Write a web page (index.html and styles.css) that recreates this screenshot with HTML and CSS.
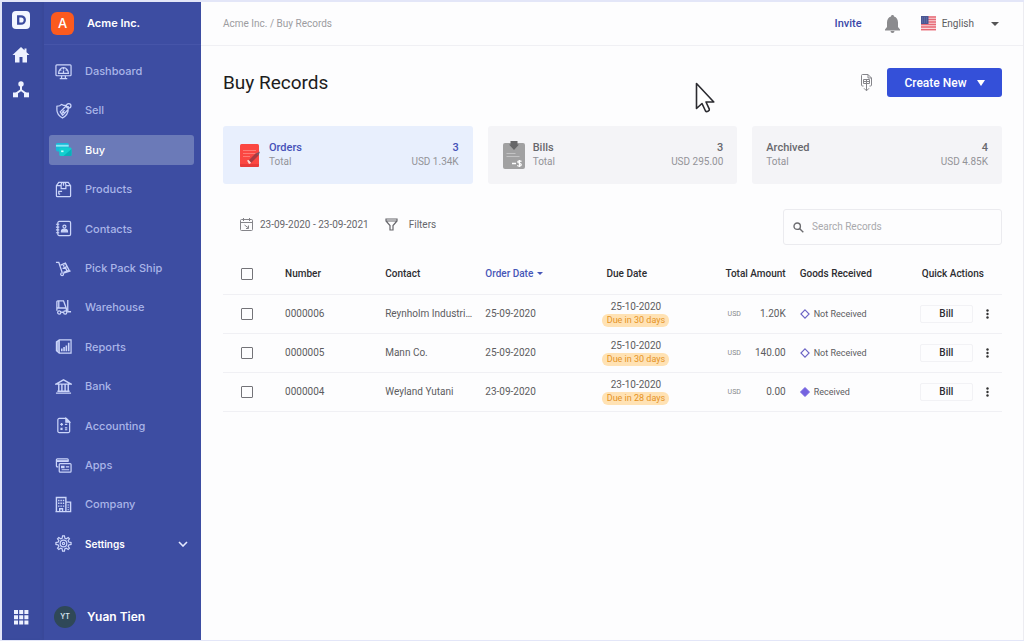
FILE: index.html
```html
<!DOCTYPE html>
<html lang="en">
<head>
<meta charset="utf-8">
<meta name="viewport" content="width=device-width, initial-scale=1">
<title>Buy Records</title>
<link rel="stylesheet" href="styles.css">
</head>
<body>
<div class="app">
  <aside class="rail">
    <a class="rail-logo" href="#" aria-label="Home page">
      <svg width="18" height="18" viewBox="0 0 18 18"><rect width="18" height="18" rx="4" fill="#f4f7ff"/><path d="M6.2 5.3h2.9a3.7 3.7 0 0 1 0 7.4H6.2z" fill="none" stroke="#3b4b9f" stroke-width="2.3"/></svg>
    </a>
    <a href="#" aria-label="Home"><svg width="18" height="16" viewBox="0 0 18 16"><path d="M9 0 .5 8H3v7.5h4.5V10h3v5.500H15V8h2.500L14.500 5.200V1.500h-2v1.800z" fill="#eef2ff"/></svg></a>
    <a href="#" aria-label="Network"><svg width="18" height="17" viewBox="0 0 18 17"><g fill="#eef2ff"><circle cx="9" cy="2.900" r="2.700"/><rect x="1" y="11.500" width="5" height="4.800"/><rect x="12" y="11.500" width="5" height="4.800"/></g><path d="M9 4v5L3.500 13M9 9l5.500 4" fill="none" stroke="#eef2ff" stroke-width="2"/></svg></a>
    <button class="rail-apps" type="button" aria-label="All apps"><svg width="16" height="16" viewBox="0 0 16 16" fill="#eef2ff"><path d="M1 1h4v4H1zM6.200 1h4v4h-4zM11.400 1h4v4h-4zM1 6.200h4v4H1zM6.200 6.200h4v4h-4zM11.400 6.200h4v4h-4zM1 11.400h4v4H1zM6.200 11.400h4v4h-4zM11.400 11.400h4v4h-4z"/></svg></button>
  </aside>

  <aside class="side">
    <div class="org"><span class="org-badge">A</span><span>Acme Inc.</span></div>
    <nav class="menu">
      <a class="item" href="#"><svg class="ico" viewBox="0 0 18 18"><rect x="1" y="2" width="16" height="11.500" rx="1"/><path d="M7 13.500v2.500M11 13.500v2.500M5 16.500h8M3.800 11A5.200 6 0 1 1 14.200 11zM9 5v2M5.500 7l1.200 1M12.500 7l-1.200 1M9 11V8"/></svg>Dashboard</a>
      <a class="item" href="#"><svg class="ico" viewBox="0 0 18 18"><path d="M12 3.500H9L7 2.500 5 4 2 4.500v4c0 3.500 2.500 6.500 6 8.500 3.500-2 6-5 6-9M5.500 10.500 11 5h3v3l-6 6zM8 9.500l2 2.500M10 8.500 7.500 12"/><circle cx="14.500" cy="4" r="2.400"/></svg>Sell</a>
      <a class="item active" href="#" aria-current="page"><svg class="ico solid" viewBox="0 0 18 18"><rect x="1" y="2" width="13.500" height="9" rx="1.500" fill="#18b9d8"/><path d="M1 4h13.500v2H1z" fill="#8be8f4"/><rect x="4.500" y="7" width="13" height="9" rx="1.500" fill="#12cfd0"/><path d="M9 16h7a1.500 1.500 0 0 0 1.500-1.500V8.500z" fill="#08b0ba"/><path d="M6.500 10H9v1.800H6.500z" fill="#c6fff8"/></svg>Buy</a>
      <a class="item" href="#"><svg class="ico" viewBox="0 0 18 18"><path d="M1.500 5 4 1.500h10L16.500 5v10.500a1 1 0 0 1-1 1h-13a1 1 0 0 1-1-1zM1.500 5H6.500M11.500 5h5M6.500 8V3.500l1-2h3l1 2V8zM9 1.500V5M4 14v-3h3.500M4 14h1.500"/></svg>Products</a>
      <a class="item" href="#"><svg class="ico" viewBox="0 0 18 18"><rect x="3" y="1.500" width="13.500" height="15" rx="1.500"/><path d="M1 4.500h3.500M1 7.500h3.500M1 10.500h3.500M1 13.500h3.500"/><circle cx="10" cy="7" r="1.600"/><path d="M6.800 12.500c0-2 1.200-2.800 3.200-2.800s3.200.8 3.200 2.800z" fill="#cbd5fa"/></svg>Contacts</a>
      <a class="item" href="#"><svg class="ico" viewBox="0 0 18 18"><path d="M1 2.500h3L7.500 13M9 14l7.500-2.500M6 5.500l5-2.200 4 7.700-6 2M8 9l4.500-2M8.500 4.500l1.200 2.500M11 8l1.700 3.500" stroke-width="1.400"/><circle cx="7.500" cy="15" r="1.500"/></svg>Pick Pack Ship</a>
      <a class="item" href="#"><svg class="ico" viewBox="0 0 18 18"><path d="M2 12.500V3a1 1 0 0 1 1-1h6l3 8v3M2 9.500h9.500M4 2v7M6.500 14H9M13.500 1v12.500H17" stroke-width="1.400"/><circle cx="4.500" cy="14.300" r="1.700"/><circle cx="10.800" cy="14.300" r="1.700"/></svg>Warehouse</a>
      <a class="item" href="#"><svg class="ico" viewBox="0 0 18 18"><path d="M4.500 2H17v14H4.500zM4.500 2 1.500 4v9.500L4.500 16M3 3v12"/><path d="M7.200 14v-3M9.600 14V9.500M12 14V8M14.500 14V5" stroke-width="1.700"/></svg>Reports</a>
      <a class="item" href="#"><svg class="ico" viewBox="0 0 18 18"><path d="M1 6.500 9 2l8 4.500zM1 16h16M2.500 14h13M4 7v7M7.300 7v7M10.700 7v7M14 7v7" stroke-width="1.500"/></svg>Bank</a>
      <a class="item" href="#"><svg class="ico" viewBox="0 0 18 18"><path d="M3 3a1.500 1.500 0 0 1 1.500-1.500H12L15.500 5v10a1.500 1.500 0 0 1-1.500 1.500H4.500A1.500 1.500 0 0 1 3 15zM5.500 7.800h3M7 6.300v3M10.500 7.800H13M5.900 11.500l2 2M7.900 11.500l-2 2M10.500 11.500H13M10.500 13.500H13"/><path d="M11.500 1.500v4h4z" fill="#cbd5fa"/></svg>Accounting</a>
      <a class="item" href="#"><svg class="ico" viewBox="0 0 18 18"><path d="M3.500 10.500h-1a1 1 0 0 1-1-1V3a1 1 0 0 1 1-1h10.500a1 1 0 0 1 1 1v2"/><path d="M1.500 4.300H14" stroke-width="2"/><rect x="4.500" y="7" width="12.500" height="9" rx="1"/><path d="M7 13.500h8M11.500 10.500H15"/><path d="M7 10h2.500v1.300H7z" fill="#cbd5fa"/></svg>Apps</a>
      <a class="item" href="#"><svg class="ico" viewBox="0 0 18 18"><path d="M1.500 16.500v-15h10v15M11.500 6.500h5v10h-16M5 16v-2.500h3V16M4 4v1.500M6.500 4v1.500M9 4v1.500M4 7v1.500M6.500 7v1.500M9 7v1.500M4 10v1.500M6.500 10v1.500M9 10v1.500M14 9v1M14 11.500v1M14 14v1" stroke-width="1.500"/></svg>Company</a>
      <a class="item open" href="#"><svg class="ico" viewBox="0 0 18 18"><path d="M7.500 3.500 8 1h2l.5 2.500 1.500.6L14 2.700 15.300 4l-1.400 2 .6 1.500L17 8v2l-2.500.5-.6 1.500 1.400 2-1.300 1.300-2-1.400-1.500.6L10 17H8l-.5-2.500-1.500-.6-2 1.400L2.700 14l1.400-2-.6-1.500L1 10V8l2.500-.5L4.100 6 2.700 4 4 2.700l2 1.400z"/><circle cx="9" cy="9" r="3.500"/><circle cx="9" cy="9" r="1.200"/></svg>Settings<svg class="chev" width="10" height="6" viewBox="0 0 10 6"><path d="M1 1l4 4 4-4" fill="none" stroke="#e4e9ff" stroke-width="1.600"/></svg></a>
    </nav>
    <div class="user"><span class="avatar">YT</span><span>Yuan Tien</span></div>
  </aside>

  <div class="main">
    <header class="top">
      <div class="crumbs"><a href="#">Acme Inc.</a> / <a href="#">Buy Records</a></div>
      <a class="invite" href="#">Invite</a>
      <button class="bell" type="button" aria-label="Notifications"><svg width="15" height="18" viewBox="0 0 15 18" fill="#8b8b8e"><path d="M7.500 0c1 0 1.500.6 1.500 1.500 2.700.8 4 3 4 6v4.500l2 2.500v1H0v-1L2 12V7.500c0-3 1.300-5.200 4-6C6 .6 6.500 0 7.500 0zM5.500 16h4a2 2 0 0 1-4 0z"/></svg></button>
      <button class="lang" type="button">
        <svg width="15" height="15" viewBox="0 0 15 15"><path d="M0 0h15v15H0z" fill="#f9d9dd"/><path d="M0 1h15M0 3.500h15M0 6h15M0 8.500h15M0 11h15M0 13.700h15" stroke="#e66a76" stroke-width="1.300"/><path d="M0 0h7.500v8H0z" fill="#4a5794"/><path d="M1 2h6M1 4h6M1 6h6" stroke="#7f8abb" stroke-width=".7" stroke-dasharray="1 1"/></svg>
        <span>English</span>
        <svg class="tri" width="8" height="4" viewBox="0 0 8 4"><path d="M0 0h8L4 4z" fill="#555"/></svg>
      </button>
    </header>

    <main class="content">
      <div class="title-row">
        <h1>Buy Records</h1>
        <button class="export" type="button" aria-label="Export"><svg width="11" height="18" viewBox="0 0 11 18" fill="none" stroke="#85858a"><path d="M2.500 12H1.500a1 1 0 0 1-1-1V1.500a1 1 0 0 1 1-1h5.500L10.500 4v7a1 1 0 0 1-1 1h-1M7 .5V4h3.500M2.500 5.500h6v4h-6zM2.500 7.500h6M5.500 5.500V16.500M3 14.300l2.500 2.500L8 14.300"/></svg></button>
        <button class="create" type="button">Create New<svg width="8" height="6" viewBox="0 0 8 6"><path d="M0 0h8L4 6z" fill="#fff"/></svg></button>
      </div>

      <section class="cards">
        <a class="card selected" href="#">
          <svg width="22" height="26" viewBox="0 0 22 26"><rect x="1" y="2" width="19" height="23" rx="1.500" fill="#fb4742"/><path d="M1 22h19v1.500a1.500 1.500 0 0 1-1.500 1.500h-16A1.500 1.500 0 0 1 1 23.500z" fill="#e83b3a"/><path d="M4 8.500h13M4 11.500h13M4 14.500h7" stroke="#fd817b" stroke-width=".9"/><path d="M9.500 18.500 17 11l2.500 2.500-7.500 7.500z" fill="#a83b42"/><path d="M17 11.500l3-1.500 1-.5-1.500 4z" fill="#7a5560"/><path d="M8 18.500l1.700-.5 2.500 3-2.200 1z" fill="#ffd9d3"/></svg>
          <span class="card-l"><b>Orders</b><span>Total</span></span>
          <span class="card-r"><b>3</b><span>USD 1.34K</span></span>
        </a>
        <a class="card" href="#">
          <svg width="22" height="30" viewBox="0 0 22 30"><rect y="3" width="22" height="26" rx="2" fill="#a1a1a2"/><path d="M7.500 1h7v3.500H16L11 10 6 4.500h1.500z" fill="#666668"/><path d="M3.500 13.500h9M3.500 16.500h13" stroke="#c3c3c4"/><path d="M9 23.500h4" stroke="#fff" stroke-width="1.500"/><path d="M18.500 21.500c-1-1-4-.8-3.700.7.300 1.300 3.500.8 3.500 2.500s-3 1.700-4 .6M16.500 20v7" fill="none" stroke="#fff" stroke-width="1.200"/></svg>
          <span class="card-l"><b>Bills</b><span>Total</span></span>
          <span class="card-r"><b>3</b><span>USD 295.00</span></span>
        </a>
        <a class="card" href="#">
          <span class="card-l"><b>Archived</b><span>Total</span></span>
          <span class="card-r"><b>4</b><span>USD 4.85K</span></span>
        </a>
      </section>

      <div class="tools">
        <button class="range" type="button"><svg width="13" height="13" viewBox="0 0 13 13" fill="none" stroke="#85858a"><rect x=".5" y="1.500" width="12" height="11" rx="1"/><path d="M.5 4.500h12M3.500 0v3M9.500 0v3M4.500 7l4 3M8.500 7.500V10.500H6"/></svg>23-09-2020 - 23-09-2021</button>
        <button class="filters" type="button"><svg width="13" height="13" viewBox="0 0 13 13" fill="none" stroke="#66666b" stroke-width="1.200"><path d="M1 1h11v2L8 7.500V12H5V7.500L1 3zM1 3h11"/></svg>Filters</button>
        <label class="search"><svg width="11" height="11" viewBox="0 0 11 11" fill="none" stroke="#6c6c70" stroke-width="1.400"><circle cx="4.200" cy="4.200" r="3.200"/><path d="M6.500 6.500l3.800 3.800"/></svg><input type="search" placeholder="Search Records" aria-label="Search Records"></label>
      </div>

      <table class="records">
        <colgroup><col class="c-check"><col class="c-text"><col class="c-text"><col class="c-date"><col class="c-date"><col class="c-total"><col class="c-goods"><col class="c-act"></colgroup>
        <thead>
          <tr><th class="check"><input type="checkbox" aria-label="Select all"></th><th>Number</th><th>Contact</th><th class="sorted" aria-sort="descending"><button type="button">Order Date<svg width="6" height="3" viewBox="0 0 6 3"><path d="M0 0h6L3 3z" fill="#4757b8"/></svg></button></th><th class="due-h">Due Date</th><th class="total-h">Total Amount</th><th>Goods Received</th><th class="act-h">Quick Actions</th></tr>
        </thead>
        <tbody>
          <tr>
            <td class="check"><input type="checkbox" aria-label="Select 0000006"></td><td>0000006</td><td class="contact">Reynholm Industries</td><td>25-09-2020</td>
            <td><div class="due"><span>25-10-2020</span><span class="pill">Due in 30 days</span></div></td>
            <td class="total"><div><small>USD</small><span>1.20K</span></div></td>
            <td><div class="goods"><svg width="10" height="10" viewBox="0 0 10 10"><path d="M5 .9 9.100 5 5 9.100.9 5z" fill="none" stroke="#6a62c4" stroke-width="1.100"/></svg>Not Received</div></td>
            <td><div class="act"><button class="bill" type="button">Bill</button><button class="more" type="button" aria-label="More"><svg width="3" height="10" viewBox="0 0 3 10" fill="#333"><circle cx="1.500" cy="1.500" r="1.200"/><circle cx="1.500" cy="5" r="1.200"/><circle cx="1.500" cy="8.500" r="1.200"/></svg></button></div></td>
          </tr>
          <tr>
            <td class="check"><input type="checkbox" aria-label="Select 0000005"></td><td>0000005</td><td class="contact">Mann Co.</td><td>25-09-2020</td>
            <td><div class="due"><span>25-10-2020</span><span class="pill">Due in 30 days</span></div></td>
            <td class="total"><div><small>USD</small><span>140.00</span></div></td>
            <td><div class="goods"><svg width="10" height="10" viewBox="0 0 10 10"><path d="M5 .9 9.100 5 5 9.100.9 5z" fill="none" stroke="#6a62c4" stroke-width="1.100"/></svg>Not Received</div></td>
            <td><div class="act"><button class="bill" type="button">Bill</button><button class="more" type="button" aria-label="More"><svg width="3" height="10" viewBox="0 0 3 10" fill="#333"><circle cx="1.500" cy="1.500" r="1.200"/><circle cx="1.500" cy="5" r="1.200"/><circle cx="1.500" cy="8.500" r="1.200"/></svg></button></div></td>
          </tr>
          <tr>
            <td class="check"><input type="checkbox" aria-label="Select 0000004"></td><td>0000004</td><td class="contact">Weyland Yutani</td><td>23-09-2020</td>
            <td><div class="due"><span>23-10-2020</span><span class="pill">Due in 28 days</span></div></td>
            <td class="total"><div><small>USD</small><span>0.00</span></div></td>
            <td><div class="goods"><svg width="10" height="10" viewBox="0 0 10 10"><path d="M5 .5 9.500 5 5 9.500.5 5z" fill="#7563e0" stroke="#7563e0" stroke-linejoin="round"/></svg>Received</div></td>
            <td><div class="act"><button class="bill" type="button">Bill</button><button class="more" type="button" aria-label="More"><svg width="3" height="10" viewBox="0 0 3 10" fill="#333"><circle cx="1.500" cy="1.500" r="1.200"/><circle cx="1.500" cy="5" r="1.200"/><circle cx="1.500" cy="8.500" r="1.200"/></svg></button></div></td>
          </tr>
        </tbody>
      </table>
    </main>
  </div>
</div>
<svg class="pointer" width="21" height="31" viewBox="0 0 21 31"><path d="M1.500 1.500v25l5.500-5 3.500 7.500c1 1.300 4.300 0 3.800-1.800L11 20h7.800z" fill="#fff" stroke="#2b2b30" stroke-width="1.600" stroke-linejoin="round"/></svg>
</body>
</html>
```

FILE: styles.css
```css
* { box-sizing: border-box; }
body {
  margin: 0;
  background: #fdfdfe;
  color: #5c5c60;
  font: 10px/14px Roboto, "Liberation Sans", sans-serif;
}
a { color: inherit; text-decoration: none; }
button {
  padding: 0;
  border: 0;
  background: none;
  color: inherit;
  font: inherit;
  cursor: pointer;
}
svg { display: block; flex: none; }

.app {
  display: flex;
  min-height: 100vh;
  border: solid #e3e6f8;
  border-width: 2px 0 1px 2px;
}

/* Icon rail */
.rail {
  display: flex;
  flex-direction: column;
  align-items: center;
  gap: 18px;
  width: 42px;
  flex: none;
  padding: 9px 4px 15px 0;
  background: #3b4b9e;
  box-shadow: inset -2px 0 2px #36458f55;
}
.rail-apps { margin-top: auto; }

/* Navigation */
.side {
  display: flex;
  flex-direction: column;
  width: 157px;
  flex: none;
  background: #3d4da2;
  color: #aab5e8;
  font-family: Inter, "Liberation Sans", sans-serif;
}
.org {
  display: flex;
  align-items: center;
  gap: 13px;
  height: 43px;
  padding-left: 7px;
  border-bottom: 1px solid #4655a9;
  color: #fff;
  font-size: 11px;
  font-weight: 600;
}
.org-badge {
  display: grid;
  place-items: center;
  width: 23px;
  height: 23px;
  border-radius: 6px;
  background: #fb5a1f;
  font-size: 13px;
  font-weight: 500;
}
.menu {
  display: flex;
  flex: 1;
  flex-direction: column;
  justify-content: space-between;
  padding: 11px 7px 0 5px;
}
.item {
  display: flex;
  align-items: center;
  gap: 13px;
  height: 30px;
  padding: 0 6px;
  border-radius: 3px;
  font-size: 11px;
  font-weight: 500;
}
.item.active { background: #6b7ab8; color: #fff; }
.item.open { color: #fff; font-size: 10px; font-weight: 600; }
.ico {
  width: 17px;
  height: 17px;
  fill: none;
  stroke: #cbd5fa;
  stroke-width: 1.3;
}
.ico.solid { stroke: none; }
.chev { margin-left: auto; }
.user {
  display: flex;
  align-items: center;
  gap: 11px;
  height: 46px;
  margin-top: 35px;
  padding-left: 10px;
  color: #fff;
  font-size: 12px;
  font-weight: 600;
}
.avatar {
  display: grid;
  place-items: center;
  width: 22px;
  height: 22px;
  border-radius: 50%;
  background: #2f4858;
  color: #d5e3ee;
  font-size: 7px;
}

/* Top bar */
.main { flex: 1; min-width: 0; border-right: 1px solid #ececf1; }
.top {
  display: flex;
  align-items: center;
  height: 44px;
  padding: 0 24px 0 22px;
  border-bottom: 1px solid #f0f0f4;
}
.crumbs { margin-right: auto; color: #9c9ca0; }
.invite { margin-right: 23px; color: #3b48a8; font-size: 11px; font-weight: 500; line-height: 16px; }
.bell { margin-right: 21px; }
.lang { display: flex; align-items: center; gap: 6px; }
.tri { margin-left: 11px; }

/* Page */
.content { padding: 22px 21px 22px 22px; }
.title-row { display: flex; align-items: center; height: 29px; }
h1 { margin: 0 auto 0 0; color: #1c1c20; font-size: 19px; font-weight: 400; line-height: 24px; }
.export { margin-right: 15px; }
.create {
  display: flex;
  align-items: center;
  justify-content: center;
  gap: 10px;
  width: 115px;
  height: 29px;
  border-radius: 3px;
  background: #3450d9;
  color: #fff;
  font-size: 12px;
  font-weight: 500;
}

.cards {
  display: grid;
  grid-template-columns: repeat(3, 1fr);
  gap: 15px;
  margin-top: 29px;
}
.card {
  display: flex;
  align-items: center;
  gap: 8px;
  height: 58px;
  padding: 0 14px;
  border-radius: 3px;
  background: #f4f4f7;
  color: #939398;
}
.card > svg { margin-left: 1px; }
.card.selected { background: #e8effd; }
.card.selected b { color: #4652b8; }
.card.selected > svg { margin-left: 2px; }
.card b { display: block; color: #68686d; font-size: 11px; font-weight: 500; }
.card-l span, .card-r span { display: block; }
.card-r { margin-left: auto; text-align: right; }

.tools { display: flex; align-items: center; margin-top: 25px; color: #66666b; }
.range, .filters { display: flex; align-items: center; gap: 7px; margin-bottom: 5px; }
.range { margin-left: 17px; }
.filters { gap: 11px; margin-left: 16px; }
.search {
  display: flex;
  align-items: center;
  gap: 8px;
  width: 219px;
  height: 36px;
  margin-left: auto;
  padding: 0 9px;
  border: 1px solid #ebebef;
  border-radius: 3px;
}
.search input {
  flex: 1;
  min-width: 0;
  padding: 0;
  border: 0;
  outline: 0;
  background: none;
  color: #5c5c60;
  font: inherit;
}
.search input::placeholder { color: #a9a9ad; }

/* Records */
.records { width: 100%; margin-top: 9px; border-collapse: collapse; table-layout: fixed; }
.c-check { width: 62px; }
.c-text { width: 100px; }
.c-date { width: 117px; }
.c-total { width: 80px; }
.c-goods { width: 120px; }
.c-act { width: 82px; }
.records th { height: 40px; padding: 0; color: #2d2d31; font-weight: 500; text-align: left; white-space: nowrap; }
.records td { height: 39px; padding: 0; }
.records tr { border-bottom: 1px solid #f0f0f4; }
.records .check { padding-left: 18px; }
.check input {
  display: block;
  width: 12px;
  height: 12px;
  margin: 1px 0 0;
  appearance: none;
  border: 1px solid #737378;
  border-radius: 1px;
}
.check input:checked { background: #3450d9; }
.sorted button { display: flex; align-items: center; gap: 4px; color: #4757b8; }
.records .due-h { padding-left: 4px; }
.records .total-h { padding-right: 14px; text-align: right; }
.records .total-h, .records .due-h { overflow: visible; }
.records .act-h { padding-left: 2px; }
.records .contact { overflow: hidden; padding-right: 12px; text-overflow: ellipsis; white-space: nowrap; }
.due { display: grid; justify-items: center; width: 67px; line-height: 14px; }
.pill {
  width: 100%;
  border-radius: 6px;
  background: #ffe2b4;
  color: #e59324;
  font-size: 9px;
  line-height: 13px;
  text-align: center;
}
.total div { display: flex; align-items: center; justify-content: space-between; padding: 0 14px 0 8px; }
.total small { color: #88888c; font-size: 7px; }
.goods { display: flex; align-items: center; gap: 4px; font-size: 9px; }
.act { display: flex; align-items: center; gap: 13px; }
.bill {
  width: 53px;
  height: 18px;
  border: 1px solid #f2f2f5;
  border-radius: 2px;
  color: #2d2d31;
  font-weight: 500;
}

/* Mouse pointer over the page */
.pointer { position: absolute; top: 82px; left: 695px; pointer-events: none; }
```
